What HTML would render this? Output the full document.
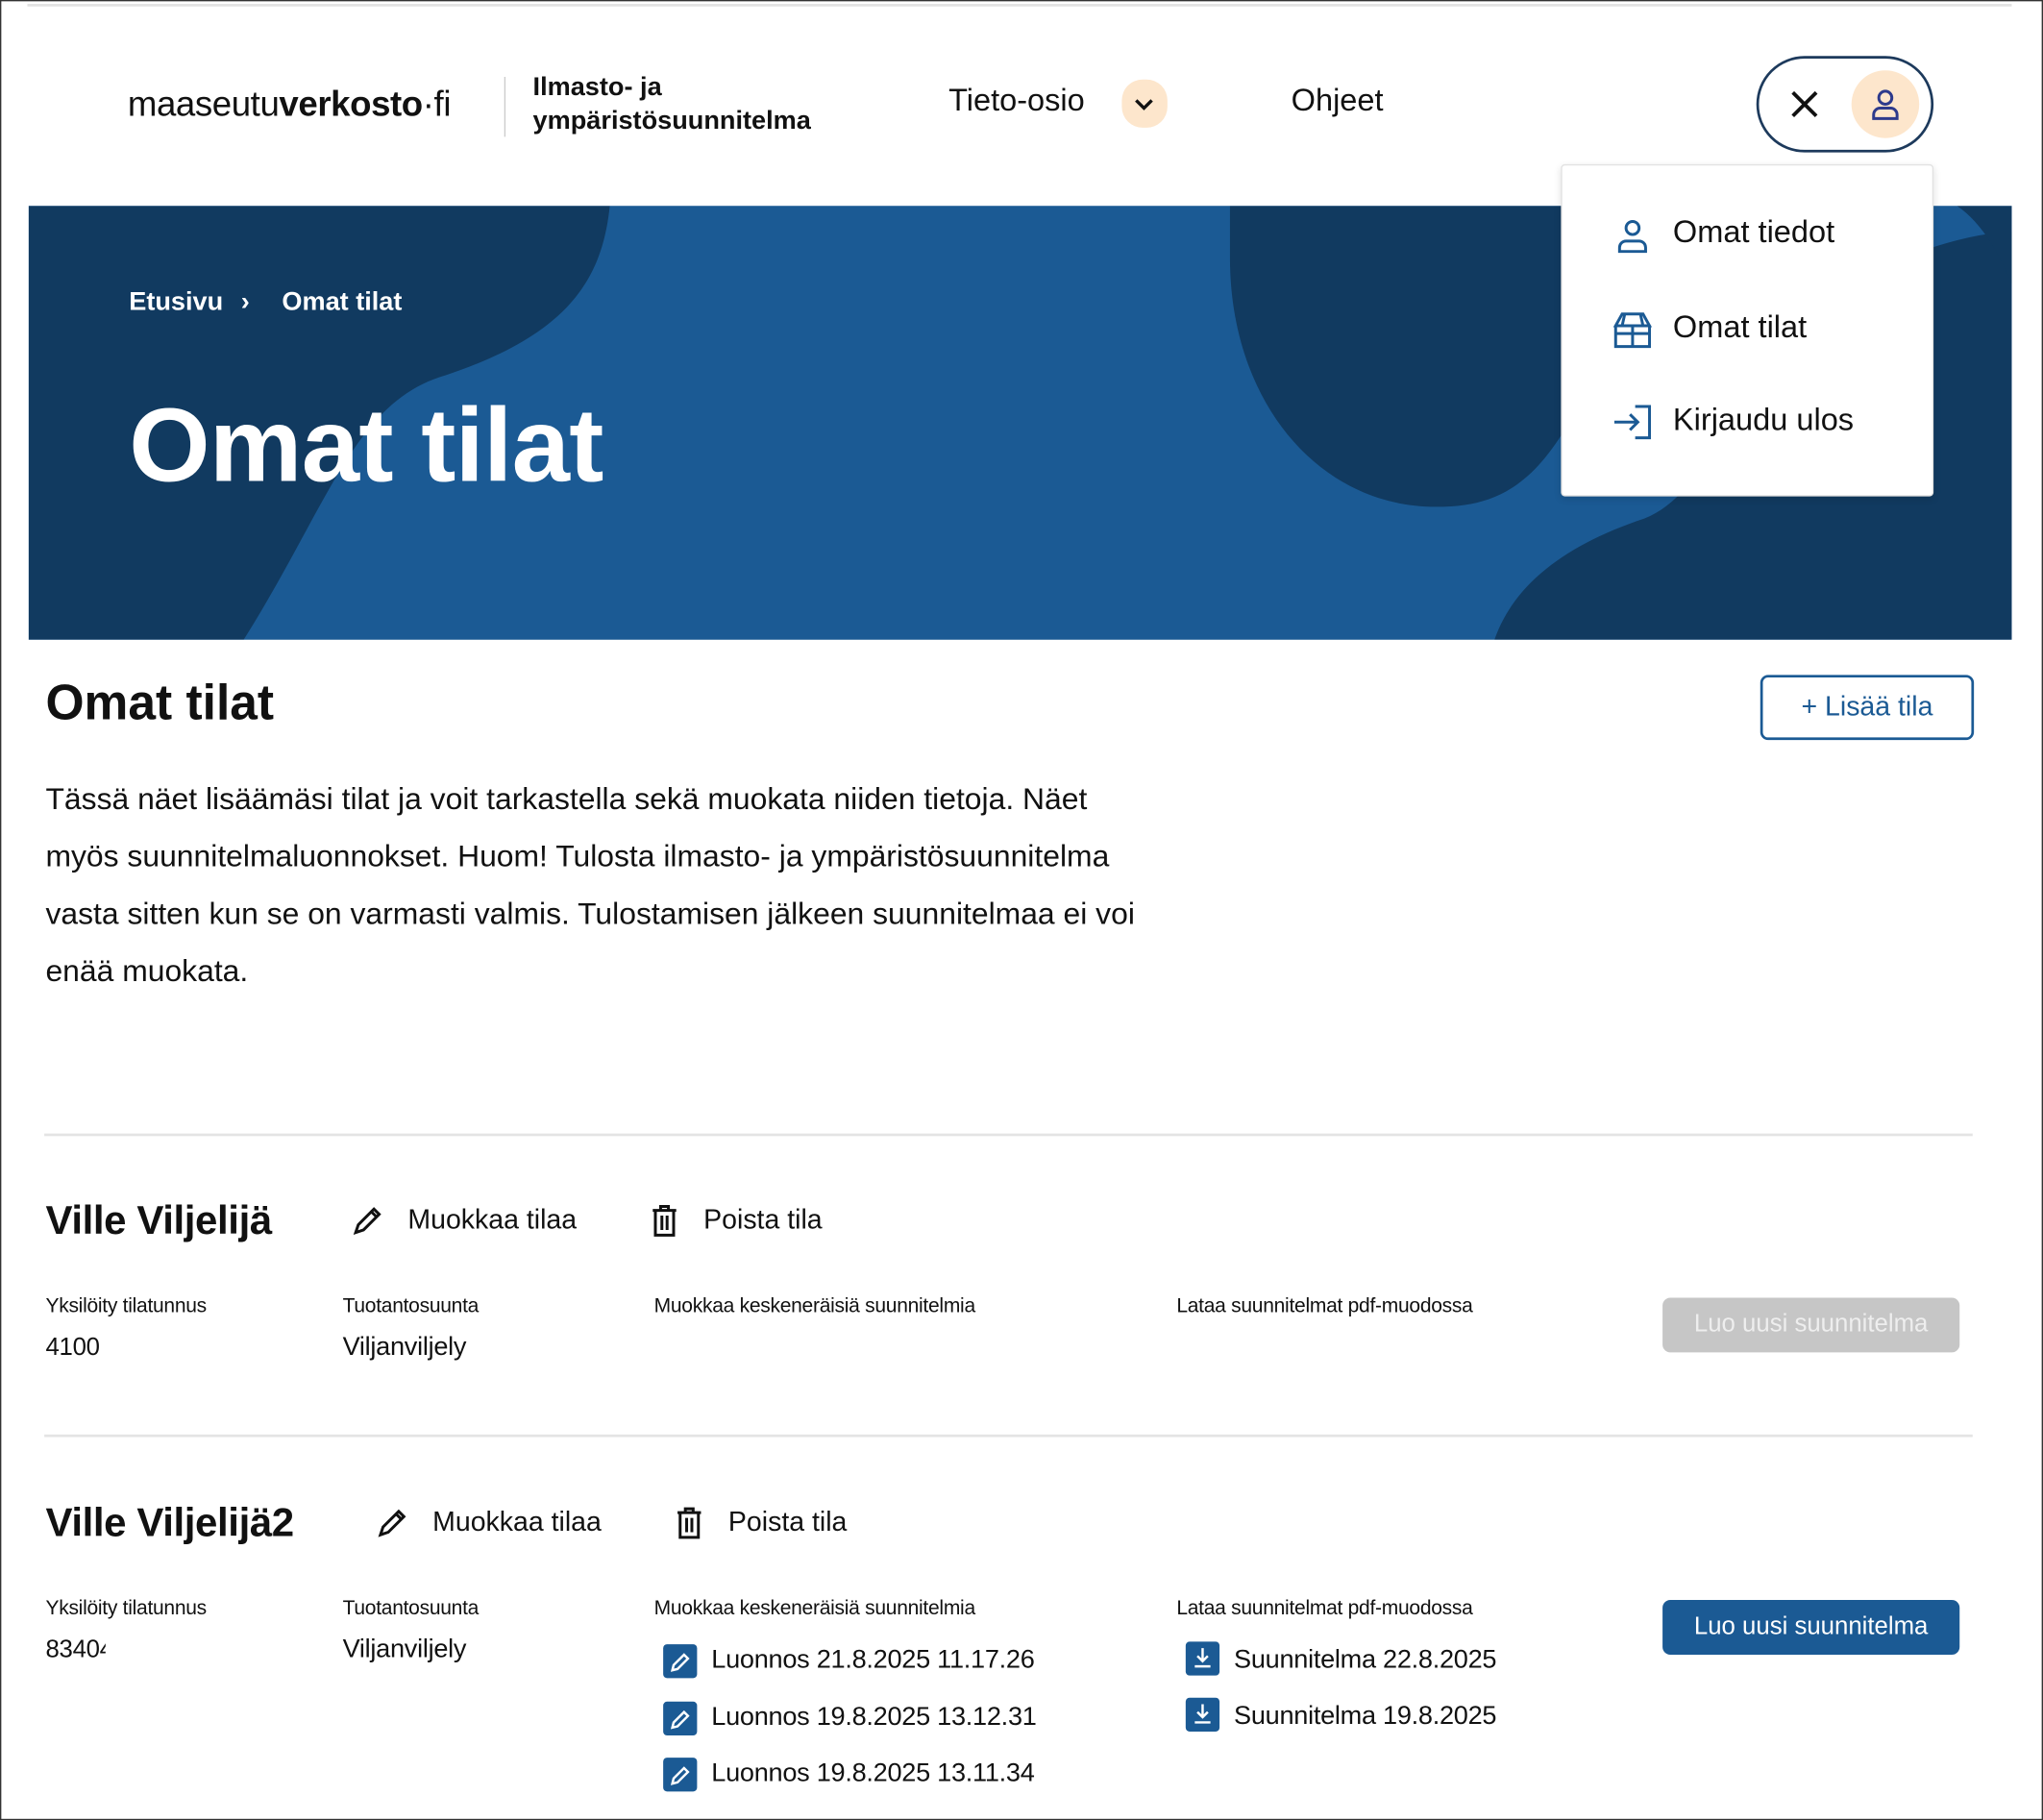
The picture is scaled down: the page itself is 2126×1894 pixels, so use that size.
<!DOCTYPE html>
<html><head><meta charset="utf-8"><style>
html,body{margin:0;padding:0;background:#fff;overflow:hidden}
body{width:2126px;height:1894px}
#w{position:absolute;left:0;top:0;width:1568px;height:1397px;transform:scale(1.35587);transform-origin:0 0;font-family:"Liberation Sans",sans-serif;color:#111;box-sizing:border-box;border:1px solid #333;}
.a{position:absolute;white-space:nowrap}
.lbl{font-size:15.5px;color:#111;letter-spacing:-0.2px}
.val{font-size:20px;letter-spacing:-0.2px}
.ic{position:absolute;width:26px;height:26px;background:#1b5a94;border-radius:3px}
</style></head><body><div id="w">
<div class="a" style="left:20px;top:2px;width:1523px;height:2px;background:#e3e3e3"></div>
<div class="a" style="left:97px;top:64px;font-size:27px;letter-spacing:-0.3px">maaseutu<b>verkosto</b>·fi</div>
<div class="a" style="left:386px;top:58px;width:1px;height:46px;background:#ccc"></div>
<div class="a" style="left:408px;top:53px;font-size:20px;font-weight:bold;line-height:26px">Ilmasto- ja<br>ympäristösuunnitelma</div>
<div class="a" style="left:727px;top:63px;font-size:24px">Tieto-osio</div>
<div class="a" style="left:860px;top:60px;width:35px;height:37px;border-radius:16px;background:#fde6cc"></div>
<svg class="a" style="left:866px;top:68px" width="22" height="22" viewBox="0 0 22 22"><path d="M5 8l6 6 6-6" fill="none" stroke="#111" stroke-width="2.5"/></svg>
<div class="a" style="left:990px;top:63px;font-size:24px">Ohjeet</div>
<div class="a" style="left:1347px;top:42px;width:132px;height:70px;border:2px solid #1d3a5c;border-radius:37px"></div>
<svg class="a" style="left:1372px;top:67px" width="24" height="24"><path d="M3 3l18 18M21 3L3 21" stroke="#111" stroke-width="2.8"/></svg>
<div class="a" style="left:1420px;top:53px;width:52px;height:52px;border-radius:50%;background:#fde6cc"></div>
<svg class="a" style="left:1432px;top:65px" width="28" height="28" viewBox="0 0 28 28"><circle cx="14" cy="9" r="5" fill="none" stroke="#2d3a8c" stroke-width="2.2"/><path d="M5 25v-3a5 5 0 0 1 5-5h8a5 5 0 0 1 5 5v3z" fill="none" stroke="#2d3a8c" stroke-width="2.2"/></svg>
<!-- hero -->
<div class="a" style="left:21px;top:157px;width:1522px;height:333px;background:#1b5a94;overflow:hidden">
<svg width="1522" height="333" style="position:absolute;left:0;top:0"><path d="M0 0H446C440 60 410 100 320 130C250 150 230 230 165 333H0Z" fill="#113a60"/><path d="M922 0H1180V170C1150 220 1120 231 1080 231C990 231 922 150 922 40Z" fill="#113a60"/><path d="M1125 333C1140 290 1180 260 1240 240C1290 220 1300 150 1400 60C1450 30 1500 20 1522 20V333Z" fill="#113a60"/><path d="M1480 0H1522V60C1510 30 1495 10 1480 0Z" fill="#113a60"/></svg>
<div class="a" style="left:77px;top:63px;font-size:20px;font-weight:bold;color:#fff">Etusivu<span style="display:inline-block;width:34px;text-align:center">›</span>&nbsp;&nbsp;Omat tilat</div>
<div class="a" style="left:77px;top:138px;font-size:80px;font-weight:bold;color:#fff;letter-spacing:-0.5px">Omat tilat</div>
</div>
<!-- dropdown -->
<div class="a" style="left:1197px;top:125px;width:284px;height:253px;background:#fff;border:1px solid #e2e2e2;box-shadow:0 2px 6px rgba(0,0,0,.12);border-radius:3px"></div>
<svg class="a" style="left:1237px;top:165px" width="30" height="30" viewBox="0 0 30 30"><circle cx="15" cy="9" r="5" fill="none" stroke="#1b5a94" stroke-width="2.2"/><path d="M5 27v-3a5 5 0 0 1 5-5h10a5 5 0 0 1 5 5v3z" fill="none" stroke="#1b5a94" stroke-width="2.2"/></svg>
<div class="a" style="left:1283px;top:164px;font-size:24px">Omat tiedot</div>
<svg class="a" style="left:1236px;top:237px" width="32" height="30" viewBox="0 0 32 30"><path d="M3 12L8 3H24L29 12ZM3 12V28H29V12M3 18H29M16 12V28M10 3L8 12M22 3L24 12" fill="none" stroke="#1b5a94" stroke-width="2.2"/></svg>
<div class="a" style="left:1283px;top:237px;font-size:24px">Omat tilat</div>
<svg class="a" style="left:1236px;top:308px" width="32" height="30" viewBox="0 0 32 30"><path d="M2 15H20M14 9l6 6-6 6M18 3H29V27H18" fill="none" stroke="#1b5a94" stroke-width="2.2"/></svg>
<div class="a" style="left:1283px;top:308px;font-size:24px">Kirjaudu ulos</div>
<!-- content -->
<div class="a" style="left:34px;top:518px;font-size:38px;font-weight:bold">Omat tilat</div>
<div class="a" style="left:1350px;top:517px;width:160px;height:46px;border:2px solid #1b5a94;border-radius:6px;color:#1b5a94;font-size:21px;text-align:center;line-height:46px">+ Lisää tila</div>
<div class="a" style="left:34px;top:590px;font-size:23.5px;line-height:44px;white-space:normal;width:850px">Tässä näet lisäämäsi tilat ja voit tarkastella sekä muokata niiden tietoja. Näet myös suunnitelmaluonnokset. Huom! Tulosta ilmasto- ja ympäristösuunnitelma vasta sitten kun se on varmasti valmis. Tulostamisen jälkeen suunnitelmaa ei voi enää muokata.</div>
<div class="a" style="left:33px;top:869px;width:1480px;height:2px;background:#e4e4e4"></div>
<div class="a" style="left:33px;top:1100px;width:1480px;height:2px;background:#e4e4e4"></div>
<!-- farm1 -->
<div class="a" style="left:34px;top:918px;font-size:31px;font-weight:bold;letter-spacing:-0.3px">Ville Viljelijä</div>
<svg class="a" style="left:268px;top:923px" width="26" height="26" viewBox="0 0 26 26"><path d="M4 22l2-6L18 4l4 4L10 20z M16 6l4 4" fill="none" stroke="#111" stroke-width="2.2"/></svg>
<div class="a" style="left:312px;top:924px;font-size:21px">Muokkaa tilaa</div>
<svg class="a" style="left:497px;top:923px" width="24" height="26" viewBox="0 0 24 26"><path d="M3 5H21M9 5V2H15V5M5 5V24H19V5M10 9V20M14 9V20" fill="none" stroke="#111" stroke-width="2.2"/></svg>
<div class="a" style="left:539px;top:924px;font-size:21px">Poista tila</div>
<div class="a lbl" style="left:34px;top:993px">Yksilöity tilatunnus</div>
<div class="a lbl" style="left:262px;top:993px">Tuotantosuunta</div>
<div class="a lbl" style="left:501px;top:993px">Muokkaa keskeneräisiä suunnitelmia</div>
<div class="a lbl" style="left:902px;top:993px">Lataa suunnitelmat pdf-muodossa</div>
<div class="a val" style="left:34px;top:1023px;font-size:19px;width:42px;overflow:hidden">41009</div>
<div class="a val" style="left:262px;top:1022px">Viljanviljely</div>
<div class="a" style="left:1275px;top:995px;width:228px;height:42px;border-radius:6px;background:#c6c6c6;color:#eee;font-size:19px;text-align:center;line-height:42px">Luo uusi suunnitelma</div>
<!-- farm2 -->
<div class="a" style="left:34px;top:1150px;font-size:31px;font-weight:bold;letter-spacing:-0.3px">Ville Viljelijä2</div>
<svg class="a" style="left:287px;top:1155px" width="26" height="26" viewBox="0 0 26 26"><path d="M4 22l2-6L18 4l4 4L10 20z M16 6l4 4" fill="none" stroke="#111" stroke-width="2.2"/></svg>
<div class="a" style="left:331px;top:1156px;font-size:21px">Muokkaa tilaa</div>
<svg class="a" style="left:516px;top:1155px" width="24" height="26" viewBox="0 0 24 26"><path d="M3 5H21M9 5V2H15V5M5 5V24H19V5M10 9V20M14 9V20" fill="none" stroke="#111" stroke-width="2.2"/></svg>
<div class="a" style="left:558px;top:1156px;font-size:21px">Poista tila</div>
<div class="a lbl" style="left:34px;top:1225px">Yksilöity tilatunnus</div>
<div class="a lbl" style="left:262px;top:1225px">Tuotantosuunta</div>
<div class="a lbl" style="left:501px;top:1225px">Muokkaa keskeneräisiä suunnitelmia</div>
<div class="a lbl" style="left:902px;top:1225px">Lataa suunnitelmat pdf-muodossa</div>
<div class="a val" style="left:34px;top:1255px;font-size:19px;width:46px;overflow:hidden">83404</div>
<div class="a val" style="left:262px;top:1254px">Viljanviljely</div>
<div class="a" style="left:1275px;top:1227px;width:228px;height:42px;border-radius:6px;background:#1b5a94;color:#fff;font-size:19px;text-align:center;line-height:42px">Luo uusi suunnitelma</div>
<div class="ic" style="left:508px;top:1261px"></div><svg class="a" style="left:508px;top:1261px" width="26" height="26"><path d="M7 20l1-4 8-8 3 3-8 8z" fill="none" stroke="#fff" stroke-width="1.8"/></svg>
<div class="a val" style="left:545px;top:1262px">Luonnos 21.8.2025 11.17.26</div>
<div class="ic" style="left:508px;top:1305px"></div><svg class="a" style="left:508px;top:1305px" width="26" height="26"><path d="M7 20l1-4 8-8 3 3-8 8z" fill="none" stroke="#fff" stroke-width="1.8"/></svg>
<div class="a val" style="left:545px;top:1306px">Luonnos 19.8.2025 13.12.31</div>
<div class="ic" style="left:508px;top:1348px"></div><svg class="a" style="left:508px;top:1348px" width="26" height="26"><path d="M7 20l1-4 8-8 3 3-8 8z" fill="none" stroke="#fff" stroke-width="1.8"/></svg>
<div class="a val" style="left:545px;top:1349px">Luonnos 19.8.2025 13.11.34</div>
<div class="ic" style="left:909px;top:1259px"></div><svg class="a" style="left:909px;top:1259px" width="26" height="26"><path d="M13 5v10M9 11l4 4 4-4M7 19h12" fill="none" stroke="#fff" stroke-width="1.8"/></svg>
<div class="a val" style="left:946px;top:1262px">Suunnitelma 22.8.2025</div>
<div class="ic" style="left:909px;top:1302px"></div><svg class="a" style="left:909px;top:1302px" width="26" height="26"><path d="M13 5v10M9 11l4 4 4-4M7 19h12" fill="none" stroke="#fff" stroke-width="1.8"/></svg>
<div class="a val" style="left:946px;top:1305px">Suunnitelma 19.8.2025</div>
</div></body></html>
